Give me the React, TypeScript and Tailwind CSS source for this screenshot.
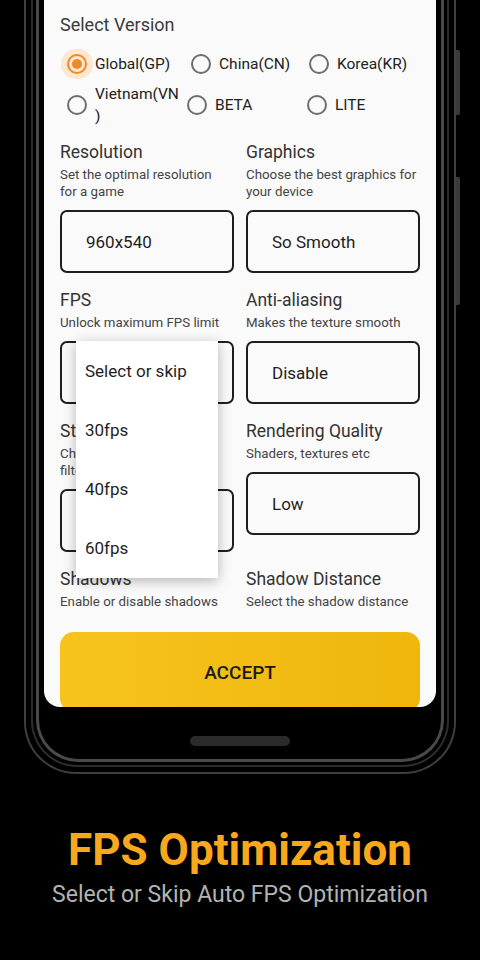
import React from "react";

const font = { fontFamily: "Roboto, 'Noto Sans', sans-serif" };

type RadioProps = { label: React.ReactNode; checked?: boolean; width: string };

const Radio = ({ label, checked, width }: RadioProps) => (
    <div className={`flex items-center shrink-0 ${width}`}>
        <div className="relative flex h-[30px] w-[20px] items-center justify-center">
            {checked && (
                <div className="absolute left-[-6px] top-0 h-[30px] w-[32px] rounded-full bg-[#fde7cf]" />
            )}
            <div
                className={`relative flex h-[20px] w-[20px] items-center justify-center rounded-full border-2 ${
                    checked ? "border-[#f0892a]" : "border-[#6e6e6e]"
                }`}
            >
                {checked && <div className="h-[10px] w-[10px] rounded-full bg-[#f0892a]" />}
            </div>
        </div>
        <div className="ml-[8px] text-[15.5px] leading-[22px] text-[#222]">{label}</div>
    </div>
);

type SettingProps = {
    title: string;
    subtitle: React.ReactNode;
    value?: string;
    children?: React.ReactNode;
};

const Setting = ({ title, subtitle, value, children }: SettingProps) => (
    <div className="flex flex-col">
        <div className="text-[17.5px] leading-[24px] text-[#333]">{title}</div>
        <div className="mt-[2px] text-[13.3px] leading-[17px] text-[#444]">{subtitle}</div>
        {value !== undefined && (
            <div className="relative mt-[10px]">
                <div className="flex h-[63px] items-center rounded-[7px] border-2 border-[#1e1e1e] pl-[24px] pt-[3px] text-[17px] text-[#1e1e1e]">
                    {value}
                </div>
                {children}
            </div>
        )}
    </div>
);

const FpsMenu = () => (
    <div className="absolute left-[16px] top-0 z-10 w-[142px] bg-white pt-[1px] shadow-[0_3px_12px_rgba(0,0,0,0.28)]">
        {["Select or skip", "30fps", "40fps", "60fps"].map((item) => (
            <div key={item} className="flex h-[59px] items-center pl-[9px] text-[17px] text-[#1e1e1e]">
                {item}
            </div>
        ))}
    </div>
);

export default function App() {
    return (
        <div className="relative h-[960px] w-[480px] overflow-hidden bg-black" style={font}>
            {/* phone */}
            <div className="relative mx-[24px] w-[432px]">
                <div className="rounded-b-[52px] border-x-2 border-b-2 border-[#3e3e3e] px-[5px] pb-[5px]">
                    <div className="rounded-b-[46px] border-x-2 border-b-2 border-[#2c2c2c] px-[3px] pb-[3px]">
                        <div className="rounded-b-[42px] border-x-[3px] border-b-[3px] border-[#4a4a4a] px-[5px] pb-[51px]">
                            <div className="h-[707px] overflow-hidden rounded-b-[16px] bg-[#fafafa] px-[16px] pt-[13px]">
                                <div className="text-[18px] leading-[24px] text-[#3a3a3a]">Select Version</div>

                                <div className="mt-[12px] flex pl-[7px]">
                                    <Radio label="Global(GP)" checked width="w-[124px]" />
                                    <Radio label="China(CN)" width="w-[118px]" />
                                    <Radio label="Korea(KR)" width="w-[100px]" />
                                </div>
                                <div className="mt-[4px] flex h-[44px] items-center pl-[7px]">
                                    <Radio
                                        label={
                                            <>
                                                Vietnam(VN
                                                <br />)
                                            </>
                                        }
                                        width="w-[120px]"
                                    />
                                    <Radio label="BETA" width="w-[120px]" />
                                    <Radio label="LITE" width="w-[100px]" />
                                </div>

                                <div className="mt-[13px] grid grid-cols-2 items-start gap-x-[12px] gap-y-[15px]">
                                    <Setting
                                        title="Resolution"
                                        subtitle={
                                            <>
                                                Set the optimal resolution
                                                <br />
                                                for a game
                                            </>
                                        }
                                        value="960x540"
                                    />
                                    <Setting
                                        title="Graphics"
                                        subtitle={
                                            <>
                                                Choose the best graphics for
                                                <br />
                                                your device
                                            </>
                                        }
                                        value="So Smooth"
                                    />
                                    <Setting title="FPS" subtitle="Unlock maximum FPS limit" value="">
                                        <FpsMenu />
                                    </Setting>
                                    <Setting title="Anti-aliasing" subtitle="Makes the texture smooth" value="Disable" />
                                    <Setting
                                        title="Style"
                                        subtitle={
                                            <>
                                                Change the graphics style
                                                <br />
                                                filter
                                            </>
                                        }
                                        value="Classic"
                                    />
                                    <Setting title="Rendering Quality" subtitle="Shaders, textures etc" value="Low" />
                                    <Setting title="Shadows" subtitle="Enable or disable shadows" />
                                    <Setting title="Shadow Distance" subtitle="Select the shadow distance" />
                                </div>

                                <button className="mt-[22px] flex h-[80px] w-full items-center justify-center rounded-[14px] bg-gradient-to-r from-[#f6c31d] to-[#efb70b] pt-[2px] text-[19px] font-medium text-[#1a1a1a]">
                                    ACCEPT
                                </button>
                            </div>
                            <div className="mx-auto -mb-[38px] mt-[29px] h-[10px] w-[100px] rounded-full bg-[#2b2b2b]" />
                        </div>
                    </div>
                </div>
                {/* side buttons */}
                <div className="absolute right-[-4px] top-[50px] h-[65px] w-[4px] rounded-r-[2px] bg-[#3a3a3a]" />
                <div className="absolute right-[-4px] top-[177px] h-[128px] w-[4px] rounded-r-[2px] bg-[#3a3a3a]" />
            </div>

            <div className="mt-[51px] text-center text-[44px] font-bold leading-[50px] text-[#f8a81c]">
                FPS Optimization
            </div>
            <div className="mt-[6px] text-center text-[23px] leading-[28px] text-[#b3b3b3]">
                Select or Skip Auto FPS Optimization
            </div>
        </div>
    );
}
